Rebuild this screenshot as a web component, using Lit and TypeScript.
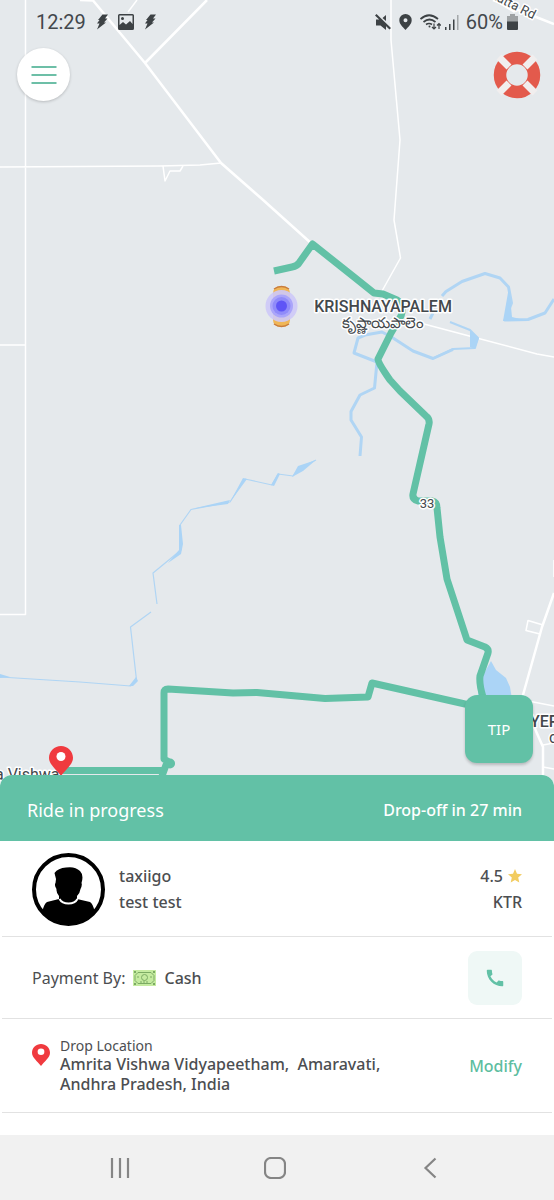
import { LitElement, html, css, svg } from "lit";
import { customElement, property } from "lit/decorators.js";

const pin = svg`
  <path fill="#f03a3f" d="M12 0C5.400 0 0 5.200 0 11.800 0 18.500 7 23 12 30c5-7 12-11.500 12-18.200C24 5.200 18.600 0 12 0Z"/>
  <circle cx="12" cy="10.500" r="4.500" fill="#fff"/>`;

@customElement("ride-map")
class RideMap extends LitElement {
  static styles = css`
    :host { display: block; overflow: hidden; background: #e5e9ec; }
    .canvas { display: block; width: 100%; height: 100%; }
    .road { fill: none; stroke: #fff; stroke-width: 1.5; stroke-linejoin: round; }
    .wide { stroke-width: 2.5; }
    .street { stroke-width: 7; }
    .water { fill: none; stroke: #b0d5f4; stroke-width: 2; stroke-linejoin: round; }
    .thin { stroke-width: 1.2; }
    .river { stroke-width: 3; }
    .lake { fill: #abd4f6; }
    .route { fill: none; stroke: #62c1a6; stroke-width: 7; stroke-linejoin: round; }
    .label {
      font-family: Roboto, "Noto Sans", sans-serif; fill: #43484c; stroke: #fff; stroke-width: 3px;
      stroke-linejoin: round; paint-order: stroke;
    }
    .town { font-size: 16px; font-weight: 500; }
    .local { font-size: 15px; }
    .small { font-size: 13px; }
    .place { font-size: 16px; }
  `;
  render() {
    return html`
      <svg class="canvas" viewBox="0 0 554 788" preserveAspectRatio="xMidYMin slice" role="img" aria-label="Route map">
        <g class="road">
          <path d="M25.500 0V614.500H0M0 345H25.500M0 167L160 166 200 165 221 163"/>
          <path d="M137 0L128 12M163 166L165 181 170 171H180L183 166"/>
          <path d="M391 0V40L400 140 394 220 400.500 258 382 291"/>
          <path d="M424 324L473 337 537 354 554 357"/>
          <path d="M543 625L528 620.500 526 630.500 540 634M523 700L554 706M543 745L554 743M543 767L554 769M554 560V577"/>
        </g>
        <g class="road wide">
          <path d="M80 0L93 .500 145 63 221 163 262 199 312 244M145 63L207 0"/>
          <path d="M554 593L542 627 523 695 532 722 543 747V788"/>
        </g>
        <path class="road street" d="M486 -8L516 10"/>
        <path class="road wide" d="M493 0L536 17 554 24"/>

        <g class="water">
          <path class="river" d="M430 319L433 313M442 296L446 291.500 462 281.500 485 273.500 500 278 508.500 287 511.500 303 505 320 528 319.500 545 313 554 299"/>
          <path d="M450 322L470 330 478 338 475 348 453 349 433 358.500"/>
          <path class="river" d="M453 349.500L433 358.500 413 351 391.500 337 382 332 365 335 358 338 354 353 377 362 374.500 388 360 395 351 411.500V420L361.500 437 360 456"/>
          <path class="thin" d="M316 460L298 469 293 476 278 474 272 485 245 479 230 502 191 509.500 180 525 181 550 153 573 157 604M151 612L130.500 627 136.500 680 130.500 686 80 682 0 677"/>
        </g>
        <g class="lake">
          <path d="M316 460L298 466 292 477 303 471ZM278 473L271 485 274 486 280 474ZM247 479L243 478 230 502ZM230 500L191 509 228 504ZM179 525V550L168 563 181 554 183 544 181 525ZM136 677L129 686 133 686 138 681ZM0 674L10 677 0 678Z"/>
          <path d="M509 287L503 321 528 321 512 317ZM470 330L479 338 475 349 470 347ZM491 661L496 670 506 678 510 687 513 705H478V684Z"/>
        </g>

        <path class="route" d="M274 271L292 267Q297 266 299 263L312.500 244 354 277 374 293 383 294 397 300Q405 305 401 316L391 333 378 359Q378 363 390 380L400 391 426 416Q430 419 429 424L413 494Q412 499 418 501H432Q437 502 437 508L440 537 447 579 467 640 485 647Q489 649 488 653L480 676Q479 684 483 697L490 708 465 704 372 683 368 697 325 698.500 257 692.500 233 693 168 689Q164 689 164 693V759L171 763.500 166 765 162 776M164 770.500H61"/>
        <circle cx="170" cy="763.500" r="5" fill="#62c1a6"/>

        <text class="label small" transform="translate(489 -3) rotate(27)">Katta Rd</text>
        <text class="label town" x="383" y="312" text-anchor="middle">KRISHNAYAPALEM</text>
        <text class="label local" x="383" y="328" text-anchor="middle">కృష్ణాయపాలెం</text>
        <text class="label small" x="427" y="508" text-anchor="middle">33</text>
        <text class="label place" x="-5" y="780">a Vishwa</text>
        <text class="label town" x="530" y="727">YERRA</text>
        <text class="label place" x="549" y="743">ca</text>

        <rect x="273" y="286" width="17" height="41" rx="7" fill="#f0b656"/>
        <path d="M274 289Q281.500 284 289 289M274 324Q281.500 329 289 324" fill="none" stroke="#c77b3f" stroke-width="1.500"/>
        <circle cx="281.500" cy="306" r="16" fill="#cdc9f8" fill-opacity=".9"/>
        <circle cx="281.500" cy="306" r="11.500" fill="#aaa5fa"/>
        <circle cx="281.500" cy="306" r="9" fill="#908bf9"/>
        <circle cx="281.500" cy="306" r="5.500" fill="#5f55f6"/>
        <svg x="49" y="746" width="24" height="30" viewBox="0 0 24 30">${pin}</svg>
      </svg>`;
  }
}

@customElement("status-bar")
class StatusBar extends LitElement {
  static styles = css`
    :host {
      display: flex; align-items: center; justify-content: space-between; height: 44px;
      padding: 0 36px; font: 20px/24px Roboto, sans-serif; color: #43484c;
    }
    .group { display: flex; align-items: center; gap: 10px; }
    .tight { gap: 4px; }
    .level { margin-left: 3px; }
    .icon { display: block; fill: #3d4245; }
  `;
  render() {
    const bolt = html`<svg class="icon" width="12" height="16" viewBox="0 0 12 16"><path d="M6.500 .500H12L9 4.500H11.500L8 8.500H10L1 15.500 3.500 9.500H1L3.500 6H2Z"/></svg>`;
    return html`
      <div class="group">
        <span>12:29</span>${bolt}
        <svg class="icon" width="16" height="16" viewBox="0 0 16 16"><path fill-rule="evenodd" d="M1.500 0H14.500Q16 0 16 1.500V14.500Q16 16 14.500 16H1.500Q0 16 0 14.500V1.500Q0 0 1.500 0ZM1.500 1.500V11L5 8 8 10.500 12 7 14.500 10V1.500ZM4.500 3A1.500 1.500 0 1 1 4.500 6 1.500 1.500 0 1 1 4.500 3Z"/></svg>
        ${bolt}
      </div>
      <div class="group tight">
        <svg class="icon" width="16" height="16" viewBox="0 0 16 16"><path d="M1 5.500H4.500L11 11V16L5.500 11.500H1ZM7.500 4L11 1V7ZM1.500 0L16 14 14.500 15.500 0 1.500Z"/></svg>
        <svg class="icon" width="21" height="16" viewBox="0 0 21 16"><path fill-rule="evenodd" d="M10.500 0A6.200 6.200 0 0 0 4.300 6.200C4.300 10 7.500 12.500 10.500 16c3-3.500 6.200-6 6.200-9.800A6.200 6.200 0 0 0 10.500 0ZM10.500 4.200A2 2 0 1 1 10.500 8.200 2 2 0 1 1 10.500 4.200Z"/></svg>
        <svg width="21" height="16" viewBox="0 0 21 16" fill="none" stroke="#3d4245" stroke-width="1.700"><path d="M.500 5Q9 -2.500 18 5M3.500 8Q9.500 3 15.500 8M6 10.500Q9 8.500 12 10.500"/><circle cx="9.500" cy="12.500" r="1" fill="#3d4245" stroke="none"/><path stroke-width="1.200" d="M14 9.500V15M12 13L14 15 16 13M19 15V9.500M17 11.500L19 9.500 21 11.500"/></svg>
        <svg class="icon" width="14" height="16" viewBox="0 0 14 16"><path d="M0 13H1.500V16H0ZM4 10H5.500V16H4ZM8 5.500H9.500V16H8Z"/><path fill="#a4a8aa" d="M12 1H13.500V16H12Z"/></svg>
        <span class="level">60%</span>
        <svg class="icon" width="11" height="16" viewBox="0 0 11 16"><path fill="#9ea2a4" d="M3 0H8V2H11V8H0V2H3Z"/><path d="M0 7.500H11V15Q11 16 10 16H1Q0 16 0 15Z"/></svg>
      </div>`;
  }
}

@customElement("ride-sheet")
class RideSheet extends LitElement {
  static styles = css`
    :host {
      display: block; background: #fff; border-radius: 12px 12px 0 0; overflow: hidden;
      padding-bottom: 22px; color: #4c4e51; font: 500 16px/26px "Noto Sans", sans-serif;
    }
    .head {
      display: flex; align-items: center; justify-content: space-between; min-height: 66px;
      padding: 4px 32px 0 27px; box-sizing: border-box; background: #62c1a6; color: #fff;
    }
    .title { margin: 0; font-size: 18px; font-weight: 400; }
    .row {
      display: flex; align-items: center; box-sizing: border-box; margin: 0 2px;
      padding: 1px 30px 0; border-bottom: 1px solid #e2e2e2;
    }
    .driver { min-height: 96px; gap: 14px; }
    .payment { min-height: 82px; gap: 8px; }
    .drop { min-height: 94px; gap: 10px; }
    .grow { flex: 1; }
    .end { text-align: right; }
    .light { font-weight: 400; }
    .icon { display: block; flex: none; }
    .rating { display: flex; align-items: center; justify-content: flex-end; gap: 5px; }
    .call {
      display: grid; place-items: center; width: 54px; height: 54px; margin-left: auto; padding: 0;
      border: 0; border-radius: 9px; background: #eff8f6;
    }
    .caption { font-size: 14px; font-weight: 400; line-height: 16px; }
    .address { line-height: 20px; white-space: pre-wrap; }
    .marker { align-self: flex-start; margin-top: 24px; }
    .modify { padding: 0; border: 0; background: none; font: inherit; color: #5dbd9f; }
  `;
  @property() driver = "taxiigo";
  @property() vehicle = "KTR";
  render() {
    return html`
      <header class="head"><h1 class="title">Ride in progress</h1><span>Drop-off in 27 min</span></header>
      <section class="row driver">
        <svg class="icon" width="73" height="73" viewBox="0 0 73 73" role="img" aria-label="Driver photo">
          <circle cx="36.500" cy="36.500" r="34.500" fill="#fff" stroke="#000" stroke-width="4"/>
          <path d="M22.500 20Q26 15 34 14.500 43 13 48 18 52 22 49.500 30 50.500 32 48.500 36 48 40 45 43V46L58 49Q61 51 62.500 58A34.500 34.500 0 0 1 10.500 58Q12 51 15 49L27 46V43Q24 39 24.500 36 22 32 23.500 30L24 26Z"/>
          <path d="M27.500 46Q30 50.500 36.500 50.500T45.500 46" fill="none" stroke="#fff" stroke-width="2"/>
        </svg>
        <div class="grow"><div>${this.driver}</div><div>test test</div></div>
        <div class="end">
          <div class="rating">4.5
            <svg class="icon" width="14" height="14" viewBox="0 0 14 14"><path fill="#f2cc60" d="M7 0L9 4.700 14 5.200 10.200 8.600 11.300 13.600 7 11 2.700 13.600 3.800 8.600 0 5.200 5 4.700Z"/></svg>
          </div>
          <div>${this.vehicle}</div>
        </div>
      </section>
      <section class="row payment">
        <span class="light">Payment By:</span>
        <svg class="icon" width="23" height="16" viewBox="0 0 23 16"><path fill="#c5eba0" d="M0 0H23V16H0Z"/><g fill="none" stroke="#7cab64"><path d="M5 2.500H18L21 5.500V10.500L18 13.500H5L2 10.500V5.500Z"/><circle cx="11.500" cy="7.500" r="3"/><path d="M7 12H16M5 6V9M18 6V9" stroke-dasharray="2 1"/></g><path fill="#7cab64" d="M1 1H3V3H1ZM20 1H22V3H20ZM1 13H3V15H1ZM20 13H22V15H20Z"/></svg>
        <span>Cash</span>
        <button class="call" aria-label="Call driver">
          <svg class="icon" width="22" height="22" viewBox="0 0 24 24"><path fill="#62c1a6" d="M20.010 15.380c-1.230 0-2.420-.200-3.530-.560-.350-.120-.740-.030-1.010.240l-1.570 1.970c-2.830-1.350-5.480-3.900-6.890-6.830l1.950-1.660c.270-.280.350-.670.240-1.020-.370-1.110-.560-2.300-.560-3.530 0-.540-.450-.990-.990-.990H4.190C3.650 3 3 3.240 3 3.990 3 13.280 10.730 21 20.010 21c.710 0 .990-.630.990-1.180v-3.450c0-.540-.450-.990-.990-.990z"/></svg>
        </button>
      </section>
      <section class="row drop">
        <svg class="icon marker" width="18" height="22" viewBox="0 0 24 30" preserveAspectRatio="none">${pin}</svg>
        <div class="grow">
          <div class="caption">Drop Location</div>
          <div class="address">Amrita Vishwa Vidyapeetham,  Amaravati,
Andhra Pradesh, India</div>
        </div>
        <button class="modify">Modify</button>
      </section>`;
  }
}

@customElement("app-root")
class AppRoot extends LitElement {
  static styles = css`
    :host { display: flex; flex-direction: column; min-height: 100vh; background: #fff; }
    .stage { position: relative; display: flex; flex-direction: column; flex: 1; min-height: 360px; }
    .map { position: absolute; inset: 0 0 -12px; }
    .over { position: relative; display: flex; flex-direction: column; flex: 1; }
    .tools { display: flex; align-items: center; justify-content: space-between; padding: 4px 13px 0 17px; }
    .round { display: grid; place-items: center; padding: 0; border: 0; border-radius: 50%; background: none; }
    .menu { width: 53px; height: 53px; background: #fff; box-shadow: 0 1px 3px #0003; }
    .tip {
      width: 68px; height: 68px; margin: auto 21px 12px auto; padding: 0; border: 0; border-radius: 12px;
      background: #62c1a6; box-shadow: 0 2px 3px #0003; color: #fff; font: 15px/20px "Noto Sans", sans-serif;
    }
    .sheet { position: relative; }
    .nav { display: flex; justify-content: space-around; align-items: center; height: 65px; padding: 0 46px 0 42px; background: #f1f1f1; }
    .key { display: grid; place-items: center; width: 48px; height: 48px; padding: 0; border: 0; background: none; }
    .glyph { display: block; fill: none; stroke: #858585; stroke-width: 2.2; }
  `;
  render() {
    return html`
      <main class="stage">
        <ride-map class="map"></ride-map>
        <div class="over">
          <status-bar></status-bar>
          <div class="tools">
            <button class="round menu" aria-label="Menu">
              <svg width="26" height="20" viewBox="0 0 26 20" stroke="#6dbfa7" stroke-width="2"><path d="M.500 2H25.500M.500 10H25.500M.500 18H25.500"/></svg>
            </button>
            <button class="round" aria-label="Help">
              <svg width="48" height="48" viewBox="0 0 48 48"><circle cx="24" cy="24" r="17" fill="none" stroke="#e35a4c" stroke-width="12.500"/><path d="M6 6L16 16M42 6L32 16M6 42L16 32M42 42L32 32" stroke="#f1eeee" stroke-width="7"/></svg>
            </button>
          </div>
          <button class="tip">TIP</button>
        </div>
      </main>
      <ride-sheet class="sheet"></ride-sheet>
      <nav class="nav" aria-label="System">
        <button class="key" aria-label="Recent apps"><svg class="glyph" width="20" height="22" viewBox="0 0 20 22"><path d="M2 1V21M10 1V21M18 1V21"/></svg></button>
        <button class="key" aria-label="Home"><svg class="glyph" width="22" height="22" viewBox="0 0 22 22"><rect x="1" y="1" width="20" height="20" rx="6"/></svg></button>
        <button class="key" aria-label="Back"><svg class="glyph" width="14" height="22" viewBox="0 0 14 22"><path d="M12.500 1.500L2.500 11 12.500 20.500"/></svg></button>
      </nav>`;
  }
}
